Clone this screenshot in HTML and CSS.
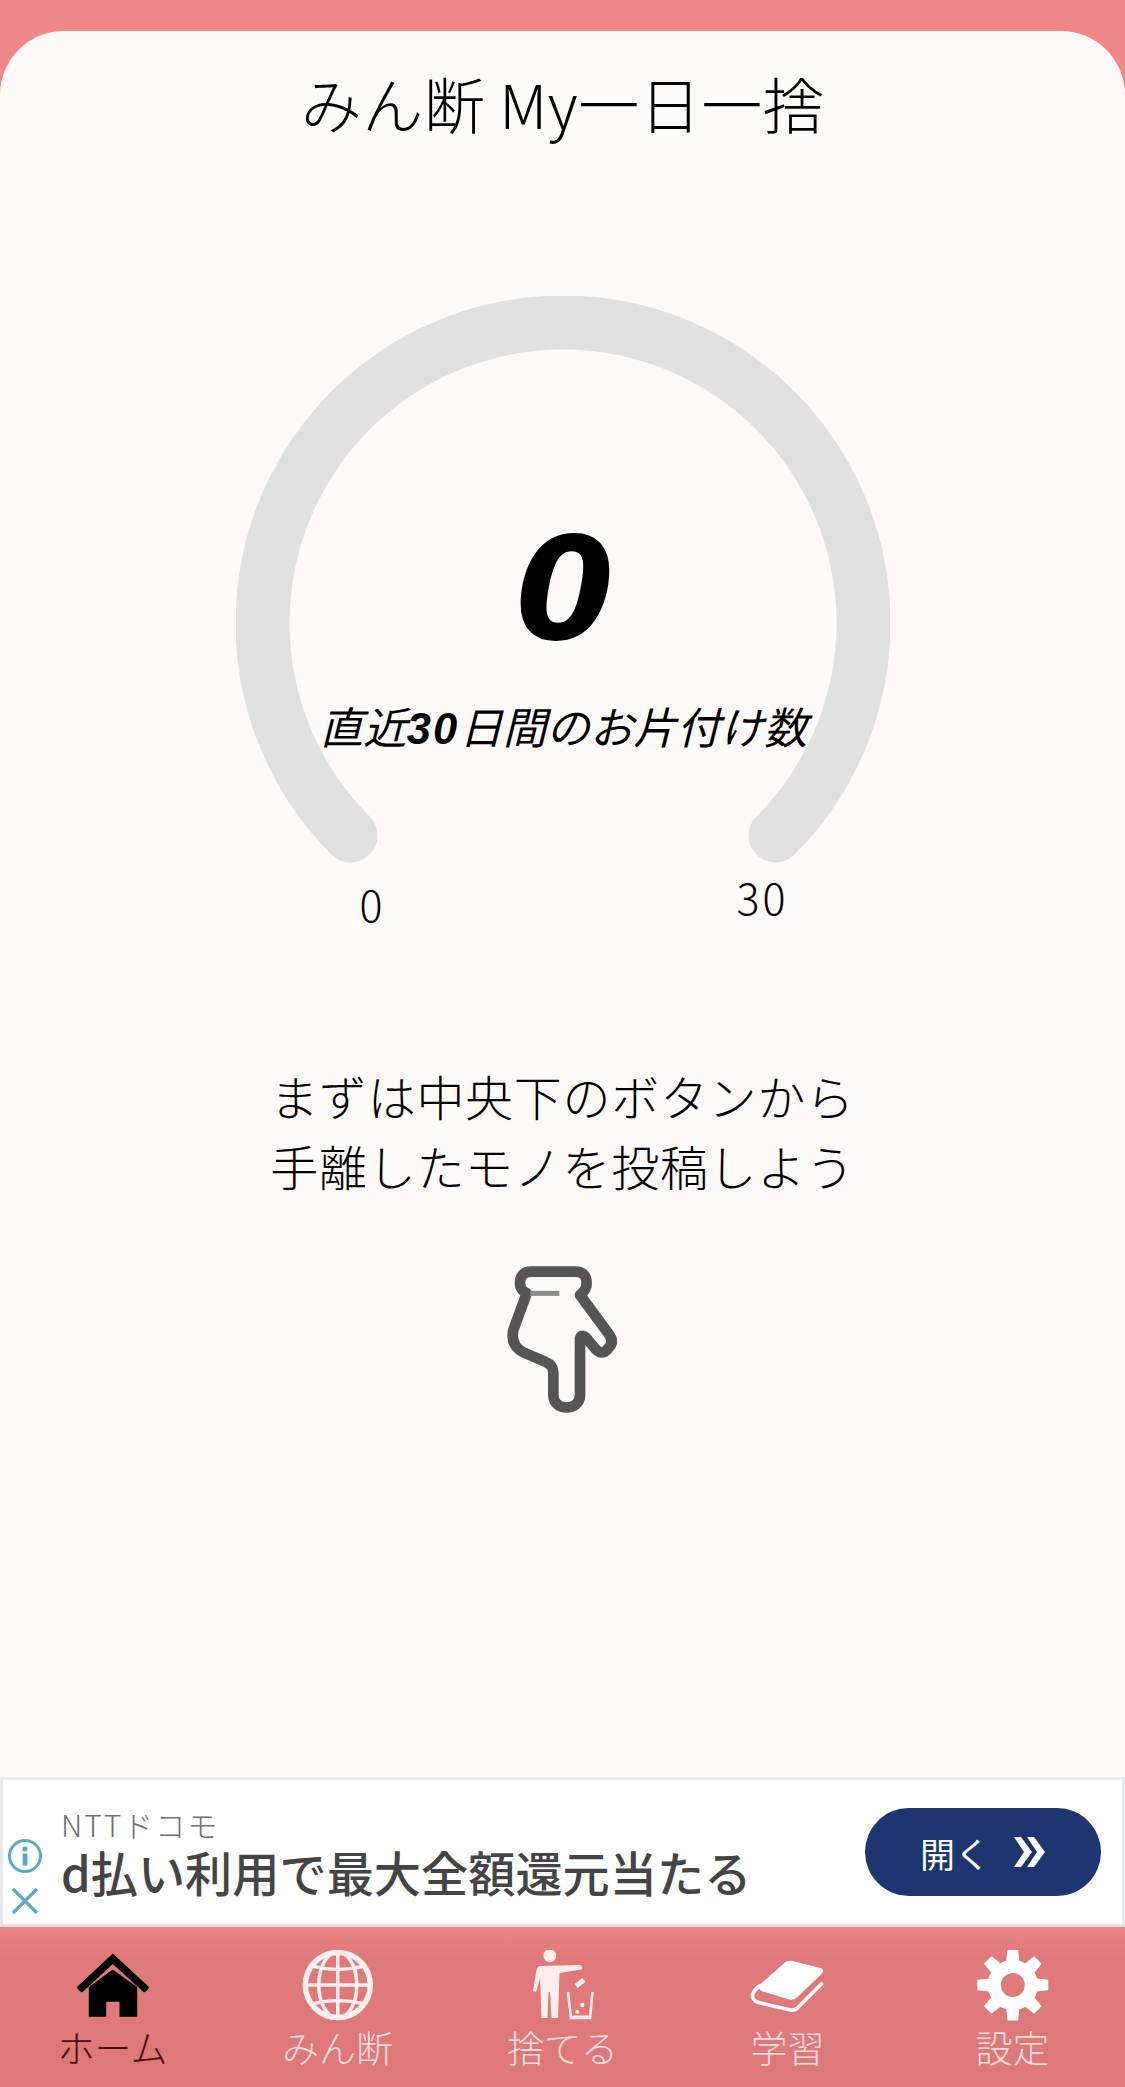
FILE: index.html
```html
<!DOCTYPE html>
<html lang="ja">
<head>
    <meta charset="UTF-8">
    <meta name="viewport" content="width=device-width, initial-scale=1.0">
    <title>みん断 My一日一捨</title>
    <link rel="stylesheet" href="styles.css">
</head>
<body>
    <div class="app">
        <main class="card">
            <h1 class="title">みん断 My一日一捨</h1>

            <div class="gauge">
                <svg class="gauge-arc" width="654" height="654" viewBox="0 0 654 654">
                    <path d="M114.5 539.5 A300.5 300.5 0 1 1 539.5 539.5" fill="none" stroke="#e0e0e0" stroke-width="54" stroke-linecap="round"/>
                </svg>
                <div class="gauge-center">
                    <div class="gauge-value">0</div>
                    <div class="gauge-caption">直近<b>30</b>日間のお片付け数</div>
                </div>
                <span class="gauge-min">0</span>
                <span class="gauge-max">30</span>
            </div>

            <p class="message">まずは中央下のボタンから<br>手離したモノを投稿しよう</p>

            <!-- pointing hand -->
            <svg class="hand" width="180" height="190" viewBox="0 0 540 570">
                <path d="M170 160 L130 270 Q120 315 160 337 L225 365 Q250 375 250 398 L250 465 C250 515 330 515 330 465 L330 295 Q335 280 350 295 L375 325 Q395 350 415 325 Q435 305 415 280 L330 165 Q350 150 350 130 Q350 95 315 95 L185 95 Q150 95 150 130 Q150 150 170 160 Z" fill="none" stroke="#555" stroke-width="32" stroke-linejoin="round"/>
                <path d="M180 160 L268 160" fill="none" stroke="#8a8a8a" stroke-width="15"/>
            </svg>
        </main>

        <aside class="ad">
            <div class="ad-icons">
                <svg width="34" height="34" viewBox="0 0 34 34">
                    <circle cx="17" cy="17" r="15.5" fill="none" stroke="#5aa9c4" stroke-width="3"/>
                    <circle cx="17" cy="10" r="2.6" fill="#5aa9c4"/>
                    <rect x="14.6" y="14.5" width="4.8" height="12" fill="#5aa9c4"/>
                </svg>
                <svg width="28" height="28" viewBox="0 0 28 28">
                    <path d="M2 2 L26 26 M26 2 L2 26" fill="none" stroke="#5aa9c4" stroke-width="3.2"/>
                </svg>
            </div>
            <div class="ad-text">
                <div class="ad-sponsor">NTTドコモ</div>
                <div class="ad-headline">d払い利用で最大全額還元当たる</div>
            </div>
            <div class="ad-button">
                <span>開く</span>
                <svg width="32" height="30" viewBox="0 0 32 30">
                    <path d="M0 0 L7 0 L18 15 L7 30 L0 30 L10 15 Z M13 0 L20 0 L31 15 L20 30 L13 30 L23 15 Z" fill="#fff"/>
                </svg>
            </div>
        </aside>

        <nav class="tabbar">
            <div class="tab active">
                <svg class="tab-icon" width="90" height="72" viewBox="2.5 10 90 72">
                    <path d="M47.3 13.5 L83.5 47 Q83 50 78.5 52.5 L47.3 24 L16.5 52.5 Q12 50 11.5 47 Z" fill="#000"/>
                    <path d="M47.3 29.5 L71.7 47 L71.7 76.7 L54 76.7 L54 61.7 L40.7 61.7 L40.7 76.7 L23.3 76.7 L23.3 47 Z" fill="#000"/>
                </svg>
                <span class="tab-label">ホーム</span>
            </div>
            <div class="tab">
                <svg class="tab-icon" width="90" height="72" viewBox="2.5 10 90 72">
                    <g fill="none" stroke="#fdeeee">
                        <circle cx="47.3" cy="45" r="32.5" stroke-width="5.5"/>
                        <ellipse cx="47.3" cy="45" rx="19" ry="33" stroke-width="3.5"/>
                        <path d="M47.3 12 L47.3 78 M14.3 45 L80.3 45 M21 26 Q47.3 33 74 26 M21 64 Q47.3 57 74 64" stroke-width="3.5"/>
                    </g>
                </svg>
                <span class="tab-label">みん断</span>
            </div>
            <div class="tab">
                <svg class="tab-icon" width="90" height="72" viewBox="-2.5 10 90 72">
                    <g fill="#fdeeee">
                        <circle cx="29.3" cy="15.7" r="6.5"/>
                        <path d="M20 26 L59 25 Q63 26 61 29.5 L39 33 L37.5 78 L31 78 L29.5 52 L28 52 L27 78 L21 78 L19.5 38 L15.5 52 L12.5 51 L16 30 Q17 26 20 26 Z"/>
                        <path d="M54 44 L62 38 L65 42 L57 48 Z"/>
                        <circle cx="61.7" cy="65" r="2.2"/>
                        <circle cx="56.7" cy="71.7" r="2"/>
                        <rect x="50" y="75.5" width="20" height="3.5"/>
                    </g>
                    <path d="M47.5 52 L50.5 78 L69.5 78 L72 52" fill="none" stroke="#fdeeee" stroke-width="2.6"/>
                </svg>
                <span class="tab-label">捨てる</span>
            </div>
            <div class="tab">
                <svg class="tab-icon" width="90" height="72" viewBox="2.5 10 90 72">
                    <path d="M45 22 Q48 20 52 21 L80 28 Q85 30 81 34 L57 57 Q53 61 47 59 L21 51 Q16 48 20 44 Z" fill="#fff"/>
                    <path d="M19 46 Q8 55 14 60 Q15 62 20 63 L50 70 Q54 70.5 57 68 L81 44" fill="none" stroke="#fff" stroke-width="3.6" stroke-linecap="round"/>
                </svg>
                <span class="tab-label">学習</span>
            </div>
            <div class="tab">
                <svg class="tab-icon" width="90" height="72" viewBox="2.5 10 90 72">
                    <circle cx="47.3" cy="45" r="18.5" fill="none" stroke="#fff" stroke-width="13"/>
                    <g fill="#fff">
                        <path d="M40.5 24 L42 9.5 L52.6 9.5 L54.1 24 Z"/>
                        <path d="M40.5 24 L42 9.5 L52.6 9.5 L54.1 24 Z" transform="rotate(45 47.3 45)"/>
                        <path d="M40.5 24 L42 9.5 L52.6 9.5 L54.1 24 Z" transform="rotate(90 47.3 45)"/>
                        <path d="M40.5 24 L42 9.5 L52.6 9.5 L54.1 24 Z" transform="rotate(135 47.3 45)"/>
                        <path d="M40.5 24 L42 9.5 L52.6 9.5 L54.1 24 Z" transform="rotate(180 47.3 45)"/>
                        <path d="M40.5 24 L42 9.5 L52.6 9.5 L54.1 24 Z" transform="rotate(225 47.3 45)"/>
                        <path d="M40.5 24 L42 9.5 L52.6 9.5 L54.1 24 Z" transform="rotate(270 47.3 45)"/>
                        <path d="M40.5 24 L42 9.5 L52.6 9.5 L54.1 24 Z" transform="rotate(315 47.3 45)"/>
                    </g>
                </svg>
                <span class="tab-label">設定</span>
            </div>
        </nav>
    </div>
</body>
</html>
```

FILE: styles.css
```css
* {
    margin: 0;
    padding: 0;
    box-sizing: border-box;
}

body {
    font-family: "Noto Sans CJK JP", "Noto Sans", sans-serif;
    background: #ef8888;
    color: #000;
}

.app {
    display: flex;
    flex-direction: column;
    height: 2087px;
    padding-top: 31px;
    overflow: hidden;
}

.card {
    flex: 1;
    display: flex;
    flex-direction: column;
    align-items: center;
    background: #fdfaf9;
    border-radius: 64px 64px 0 0;
}

.title {
    margin-top: 30px;
    font-size: 61px;
    font-weight: 300;
    letter-spacing: 0.5px;
    line-height: 84px;
    white-space: nowrap;
}

.gauge {
    position: relative;
    width: 654px;
    height: 654px;
    margin-top: 151px;
}

.gauge-arc {
    display: block;
}

.gauge-center {
    position: absolute;
    top: 220px;
    left: 0;
    right: 0;
    text-align: center;
    font-style: italic;
}

.gauge-value {
    font-family: "DejaVu Sans", sans-serif;
    font-size: 142px;
    font-weight: 700;
    line-height: 148px;
    padding-left: 5px;
}

.gauge-caption {
    margin-top: 32px;
    font-size: 43.5px;
    line-height: 60px;
    padding-left: 2px;
    white-space: nowrap;
}

.gauge-caption b {
    font-family: "Liberation Sans", sans-serif;
    font-weight: 700;
    letter-spacing: 2px;
}

.gauge-min,
.gauge-max {
    position: absolute;
    font-size: 43px;
    font-weight: 300;
    line-height: 48px;
}

.gauge-min {
    left: 124px;
    top: 583px;
}

.gauge-max {
    left: 501px;
    top: 576px;
    letter-spacing: 3px;
}

.message {
    margin-top: 110px;
    font-size: 48px;
    font-weight: 300;
    letter-spacing: 0.7px;
    line-height: 70px;
    text-align: center;
}

.hand {
    display: block;
    margin-top: 40px;
    margin-right: 6px;
}

.ad {
    display: flex;
    align-items: stretch;
    height: 150px;
    background: #fff;
    border: 3px solid #e8e9ea;
    border-bottom-color: #f2dcdc;
}

.ad-icons {
    display: flex;
    flex-direction: column;
    align-items: center;
    justify-content: flex-end;
    gap: 14px;
    width: 44px;
    padding: 0 0 9px 0;
}

.ad-text {
    flex: 1;
    padding: 25px 0 0 14px;
}

.ad-sponsor {
    font-size: 30px;
    font-weight: 300;
    letter-spacing: 2px;
    line-height: 38px;
    color: #6f6f6f;
}

.ad-headline {
    font-size: 47.2px;
    font-weight: 500;
    line-height: 58px;
    color: #444;
    white-space: nowrap;
}

.ad-button {
    display: flex;
    align-items: center;
    justify-content: center;
    gap: 24px;
    width: 236px;
    height: 88px;
    margin: 28px 21px 0 0;
    background: #1d3570;
    border-radius: 44px;
    color: #fff;
    font-size: 35px;
    font-weight: 400;
}

.tabbar {
    display: grid;
    grid-template-columns: repeat(5, 1fr);
    height: 160px;
    background: linear-gradient(#ec8484, #e07a7a 30px, #dd7878);
}

.tab {
    display: flex;
    flex-direction: column;
    align-items: center;
    padding-top: 23px;
}

.tab-icon {
    display: block;
}

.tab-label {
    margin-top: 2px;
    font-size: 37px;
    font-weight: 300;
    line-height: 46px;
    color: #fbdada;
}

.tab.active .tab-label {
    color: #4a0d0d;
}
```
